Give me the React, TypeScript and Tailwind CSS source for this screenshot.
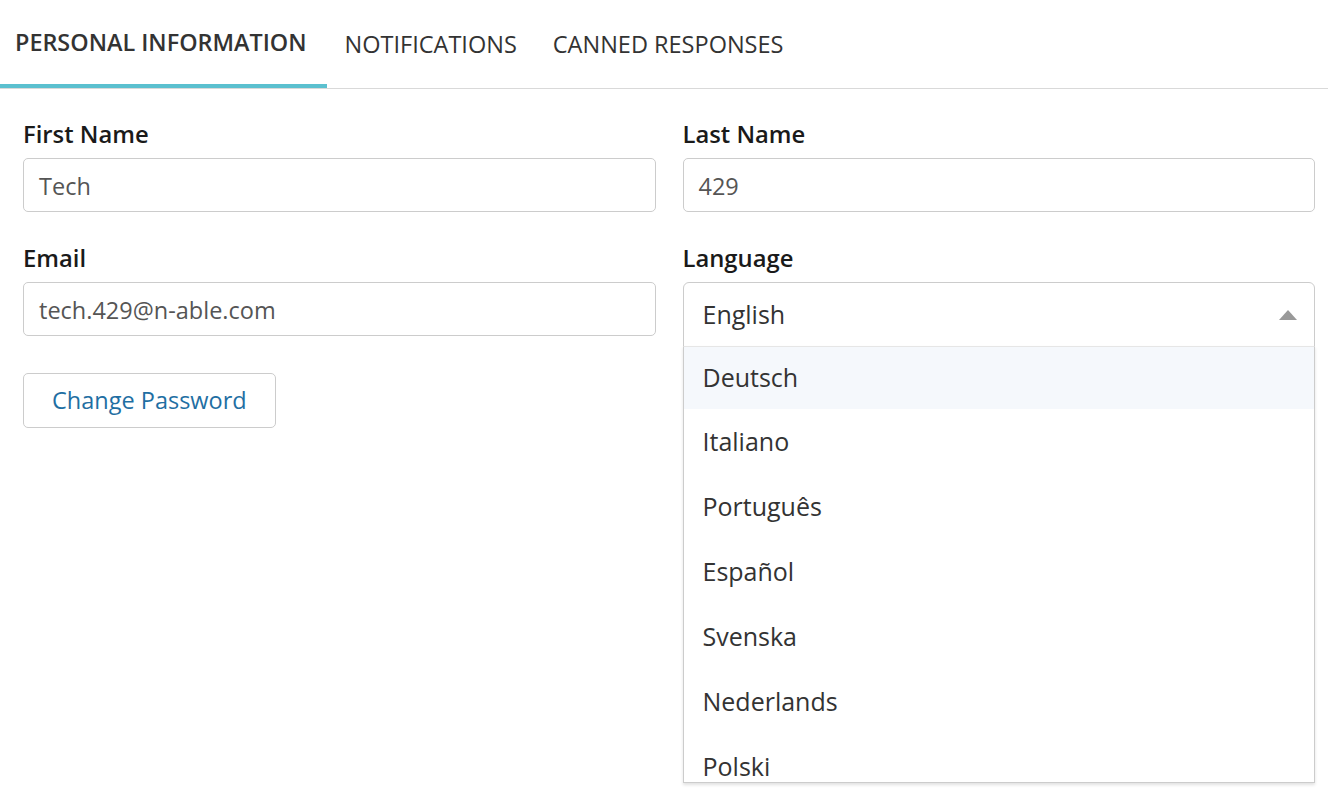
import { useState } from "react";

const tabs = ["PERSONAL INFORMATION", "NOTIFICATIONS", "CANNED RESPONSES"];
const languages = ["Deutsch", "Italiano", "Português", "Español", "Svenska", "Nederlands", "Polski"];

function Field({ label, value }: { label: string; value: string }) {
  return (
    <div className="flex flex-col">
      <label className="h-[34px] text-[23.8px] font-semibold leading-[34px] text-[#1a1a1a]">{label}</label>
      <div className="mt-[7px] flex h-[54px] items-center rounded-[5px] border border-[#cccccc] px-[15px] pt-[3px] text-[23.5px] text-[#555555]">
        {value}
      </div>
    </div>
  );
}

export default function App() {
  const [active] = useState(0);

  return (
    <div className="h-[794px] w-[1328px] overflow-hidden bg-white font-['Open_Sans',sans-serif]">
      {/* Tabs */}
      <div className="flex h-[89px] border-b border-[#d9d9d9]">
        {tabs.map((t, i) => (
          <div
            key={t}
            className={
              i === active
                ? "flex items-center border-b-4 border-[#5bc0cf] pl-[15px] pr-[20px] pt-[2px] text-[23.4px] font-semibold text-[#333333]"
                : "flex items-center px-[18px] pt-[2px] text-[23.5px] text-[#333333]"
            }
          >
            {t}
          </div>
        ))}
      </div>

      {/* Form */}
      <div className="grid grid-cols-2 gap-x-[27px] pl-[23px] pr-[13px] pt-[28px]">
        <div className="flex flex-col gap-[29px]">
          <Field label="First Name" value="Tech" />
          <Field label="Email" value="tech.429@n-able.com" />
          <div>
            <button className="mt-[8px] h-[55px] rounded-[5px] border border-[#cccccc] px-[28px] pt-[1px] text-[23.5px] text-[#1f6fa3]">
              Change Password
            </button>
          </div>
        </div>

        <div className="flex flex-col gap-[29px]">
          <Field label="Last Name" value="429" />
          <div className="flex flex-col">
            <label className="h-[34px] text-[23.8px] font-semibold leading-[34px] text-[#1a1a1a]">Language</label>
            <div className="relative mt-[7px]">
              <div className="flex h-[65px] items-center justify-between rounded-t-[6px] border border-[#cccccc] pl-[19px] pr-[17px] text-[25px] text-[#333333]">
                <span>English</span>
                <svg width="18" height="10" viewBox="0 0 18 10">
                  <path d="M0 10 L9 0 L18 10 Z" fill="#999999" />
                </svg>
              </div>
              <div className="absolute left-0 right-0 top-[64px] h-[437px] overflow-hidden border border-t-[#e6e6e6] border-x-[#cccccc] border-b-[#cccccc] bg-white shadow-[0_2px_3px_rgba(0,0,0,0.12)]">
                {languages.map((l, i) => (
                  <div
                    key={l}
                    className={
                      "flex items-center pl-[19px] text-[25px] text-[#333333] " +
                      (i === 0 ? "h-[62px] bg-[#f5f8fc]" : "h-[65px]")
                    }
                  >
                    {l}
                  </div>
                ))}
              </div>
            </div>
          </div>
        </div>
      </div>
    </div>
  );
}
